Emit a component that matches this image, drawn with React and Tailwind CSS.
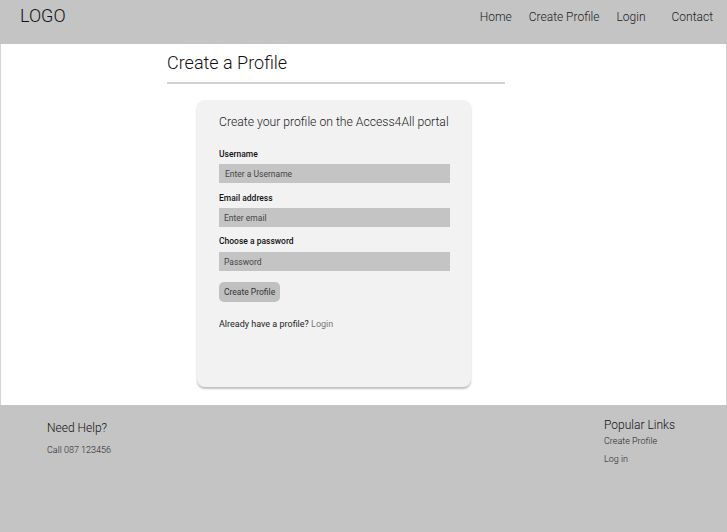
import React from "react"

export default function App() {
    return (
        <div className="w-[727px] h-[532px] flex flex-col bg-white font-['Roboto',sans-serif] text-[#111] overflow-hidden">
            {/* Header */}
            <header className="h-[44px] bg-[#c4c4c4] flex items-start justify-between pl-[20px] pr-[14px]">
                <div className="text-[18px] font-light leading-none mt-[7px] text-[#111]">LOGO</div>
                <nav className="flex text-[12px] font-light leading-none mt-[11px] text-[#222] whitespace-nowrap">
                    <a className="mr-[17px]">Home</a>
                    <a className="mr-[17px]">Create Profile</a>
                    <a className="mr-[26px]">Login</a>
                    <a>Contact</a>
                </nav>
            </header>

            {/* Main */}
            <main className="h-[361px] border-x border-[#d4d4d4] flex flex-col items-start">
                <div className="ml-[166px] w-[338px] border-b-2 border-[#d2d2d2] pt-[8px] pb-[8px]">
                    <h1 className="text-[18px] font-light leading-[22px] text-[#111]">Create a Profile</h1>
                </div>

                <div className="ml-[196px] mt-[16px] w-[274px] h-[287px] bg-[#f2f2f2] rounded-[8px] shadow-[0_2px_2px_rgba(0,0,0,0.25)] pl-[22px] pr-[21px] pt-[14px]">
                    <h2 className="text-[12.2px] font-light leading-[16px] text-[#222] whitespace-nowrap">
                        Create your profile on the Access4All portal
                    </h2>

                    <form className="mt-[19px] flex flex-col">
                        <label className="text-[8.5px] font-medium leading-[10px] text-[#111]">Username</label>
                        <input
                            className="mt-[5px] h-[19px] w-full bg-[#c4c4c4] px-[6px] text-[8.5px] placeholder-[#444] outline-none"
                            placeholder="Enter a Username"
                        />
                        <label className="mt-[10px] text-[8.5px] font-medium leading-[10px] text-[#111]">Email address</label>
                        <input
                            className="mt-[5px] h-[19px] w-full bg-[#c4c4c4] px-[5px] text-[8.5px] placeholder-[#444] outline-none"
                            placeholder="Enter email"
                        />
                        <label className="mt-[9px] text-[8.5px] font-medium leading-[10px] text-[#111]">Choose a password</label>
                        <input
                            type="password"
                            className="mt-[6px] h-[19px] w-full bg-[#c4c4c4] px-[5px] text-[8.5px] placeholder-[#444] outline-none"
                            placeholder="Password"
                        />
                        <button
                            type="button"
                            className="mt-[11px] self-start h-[20px] px-[5px] rounded-[5px] bg-[#c0c0c0] text-[8.5px] text-[#333]"
                        >
                            Create Profile
                        </button>
                        <p className="mt-[17px] text-[9px] leading-[11px] text-[#222]">
                            Already have a profile? <a className="text-[#777]">Login</a>
                        </p>
                    </form>
                </div>
            </main>

            {/* Footer */}
            <footer className="flex-1 bg-[#c4c4c4] flex justify-between pl-[47px] pr-[56px]">
                <div className="pt-[16px]">
                    <h3 className="text-[12px] font-light leading-[14px] text-[#111]">Need Help?</h3>
                    <p className="mt-[10px] text-[9px] font-light leading-[11px] text-[#222]">Call 087 123456</p>
                </div>
                <div className="pt-[13px] w-[67px]">
                    <h3 className="text-[12px] font-light leading-[14px] text-[#111] whitespace-nowrap">Popular Links</h3>
                    <p className="mt-[4px] text-[9px] font-light leading-[11px] text-[#222] whitespace-nowrap">Create Profile</p>
                    <p className="mt-[7px] text-[9px] font-light leading-[11px] text-[#222]">Log in</p>
                </div>
            </footer>
        </div>
    )
}
